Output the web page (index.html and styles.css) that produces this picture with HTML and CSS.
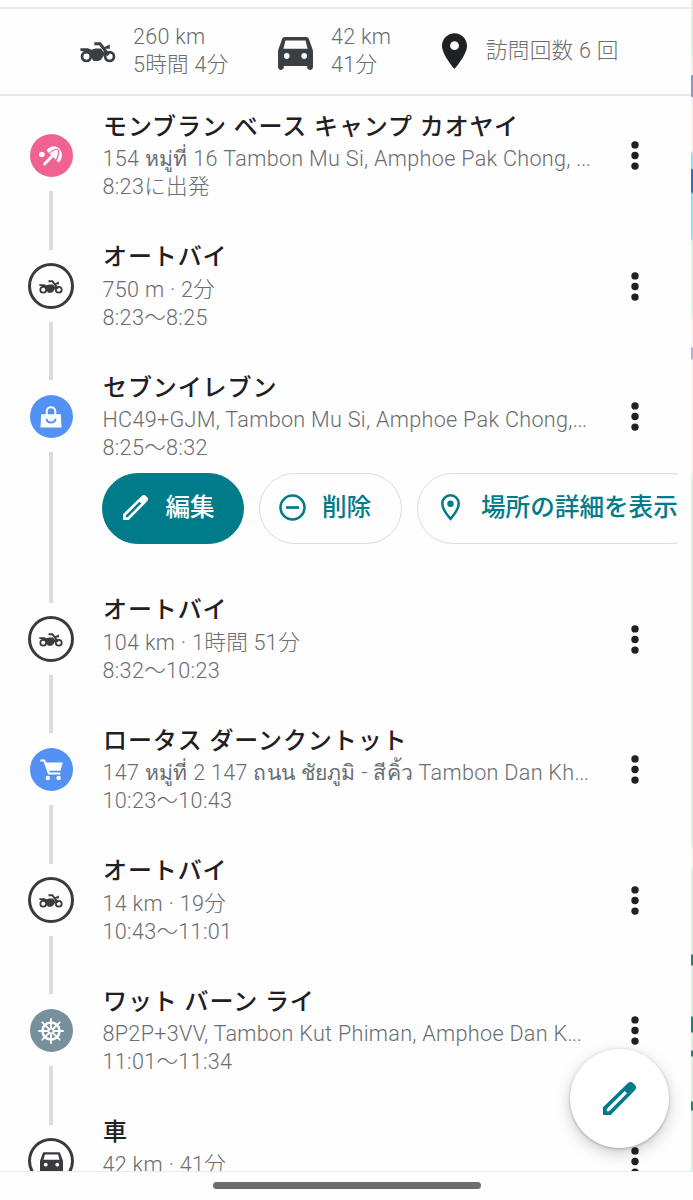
FILE: index.html
```html
<!DOCTYPE html>
<html lang="ja">

<head>
    <title>タイムライン</title>
    <meta charset="UTF-8">
    <link rel="stylesheet" href="styles.css">
</head>

<body>
    <!-- shared icons -->
    <svg class="sprite" width="0" height="0">
        <symbol id="moto" viewBox="0 0 36 21">
            <circle cx="6.4" cy="14.6" r="4.4" fill="none" stroke="currentColor" stroke-width="2.7" />
            <circle cx="29.6" cy="14.6" r="4.4" fill="none" stroke="currentColor" stroke-width="2.7" />
            <path d="M.4 6.2h7.6l3.2 1.600 4.200-1.200h5.600l2.300 3.200 2.800-1-.4 2.200-5 7-2.600 1.100h-4.600l-2.600-4.400C10.400 11.800 7.800 10 3.500 9.400L.4 8.800z" fill="currentColor" />
            <path d="M14.300 1.800h5.700l8.600 11.200" fill="none" stroke="currentColor" stroke-width="2.900" />
            <path d="M23.300 5.400l6.500-3v4.400h-5z" fill="currentColor" />
        </symbol>
        <symbol id="car" viewBox="3 4 18 17">
            <path d="M18.920 5.010C18.720 4.420 18.160 4 17.500 4h-11c-.66 0-1.210.42-1.420 1.010L3 11v8.500c0 .83.67 1.500 1.500 1.500S6 20.330 6 19.500V19h12v.5c0 .83.67 1.500 1.500 1.500s1.500-.67 1.500-1.500V11l-2.080-5.990zM6.850 5.800h10.300l1.100 4.200H5.750L6.850 5.800zM7.500 15.300c-.83 0-1.500-.67-1.500-1.500s.67-1.500 1.500-1.500 1.500.67 1.500 1.500-.67 1.500-1.500 1.500zm9 0c-.83 0-1.500-.67-1.500-1.500s.67-1.500 1.500-1.500 1.500.67 1.500 1.500-.67 1.500-1.500 1.500z" fill="currentColor" />
        </symbol>
        <symbol id="pencil" viewBox="0 0 24 24">
            <path d="M0 24v-5.600L18 .9c1.300-1.300 3-1.100 4 0l1.200 1.200c1.100 1.100 1.100 2.800 0 3.900L5.600 24H0zM2.700 21.300h1.700L17.500 8.200l-1.700-1.700L2.700 19.600z" fill="currentColor" fill-rule="evenodd" />
        </symbol>
        <symbol id="more" viewBox="0 0 8 29">
            <circle cx="4" cy="3.900" r="3.700" fill="currentColor" />
            <circle cx="4" cy="14.500" r="3.700" fill="currentColor" />
            <circle cx="4" cy="25.100" r="3.700" fill="currentColor" />
        </symbol>
    </svg>

    <div class="sheet">
        <header class="summary">
            <div class="stat stat-moto">
                <svg class="icon-moto"><use href="#moto" /></svg>
                <p>260 km<br>5時間 4分</p>
            </div>
            <div class="stat stat-car">
                <svg class="icon-car"><use href="#car" /></svg>
                <p>42 km<br>41分</p>
            </div>
            <div class="stat stat-visits">
                <svg class="icon-pin" viewBox="5 2 14 20">
                    <path d="M12 2C8.130 2 5 5.130 5 9c0 5.250 7 13 7 13s7-7.750 7-13c0-3.870-3.130-7-7-7zm0 9.500a2.500 2.500 0 010-5 2.500 2.500 0 010 5z" fill="currentColor" />
                </svg>
                <p>訪問回数 6 回</p>
            </div>
        </header>

        <main class="timeline">
            <div class="item">
                <div class="rail">
                    <div class="marker pink">
                        <svg width="24" height="20" viewBox="0 0 24 20">
                            <circle cx="2.800" cy="8.500" r="2.800" fill="#fff" />
                            <path d="M7.500 4.600C11.500-1.200 18-.6 20.800 3.200c3.200 4 3.100 9-1.100 13.300L7.500 4.600z" fill="#fff" />
                            <path d="M16.500 6.500L5.600 18" stroke="#fff" stroke-width="2.800" stroke-linecap="round" />
                            <path d="M10.500 7.200c2.600-2.600 5.600-4.200 8.500-4.200M17.300 14c1.900-3.600 2.700-7 2.200-10.500" fill="none" stroke="#f06292" stroke-width="1.200" />
                        </svg>
                    </div>
                </div>
                <div class="content">
                    <div class="head">
                        <div class="text">
                            <h2>モンブラン ベース キャンプ カオヤイ</h2>
                            <p>154 <span class="thai">หมู่ที่</span> 16 Tambon Mu Si, Amphoe Pak Chong, <span class="dots">...</span></p>
                            <p>8:23に出発</p>
                        </div>
                        <svg class="more"><use href="#more" /></svg>
                    </div>
                </div>
            </div>

            <div class="item">
                <div class="rail">
                    <div class="marker ring"><svg class="ring-moto"><use href="#moto" /></svg></div>
                </div>
                <div class="content">
                    <div class="head">
                        <div class="text">
                            <h2>オートバイ</h2>
                            <p>750 m · 2分</p>
                            <p>8:23～8:25</p>
                        </div>
                        <svg class="more"><use href="#more" /></svg>
                    </div>
                </div>
            </div>

            <div class="item expanded">
                <div class="rail">
                    <div class="marker blue">
                        <svg width="22" height="22" viewBox="0 0 22 22">
                            <path d="M1.200 8.300h19.600L21.500 21.500H.5z" fill="#fff" />
                            <path d="M6.700 9V5.500C6.700-.3 15.300-.3 15.300 5.500V9" fill="none" stroke="#fff" stroke-width="2" />
                            <path d="M6.400 12.700c.6 5.200 8.600 5.200 9.200 0" fill="none" stroke="#5491f5" stroke-width="1.900" />
                        </svg>
                    </div>
                </div>
                <div class="content">
                    <div class="head">
                        <div class="text">
                            <h2>セブンイレブン</h2>
                            <p>HC49+GJM, Tambon Mu Si, Amphoe Pak Chong,<span class="dots">...</span></p>
                            <p>8:25～8:32</p>
                        </div>
                        <svg class="more"><use href="#more" /></svg>
                    </div>
                    <div class="actions">
                        <button class="chip filled">
                            <svg width="25" height="25"><use href="#pencil" /></svg>
                            <span>編集</span>
                        </button>
                        <button class="chip">
                            <svg width="27" height="27" viewBox="0 0 27 27">
                                <circle cx="13.500" cy="13.500" r="12" fill="none" stroke="currentColor" stroke-width="2.500" />
                                <path d="M7 13.500h13" stroke="currentColor" stroke-width="2.700" />
                            </svg>
                            <span>削除</span>
                        </button>
                        <button class="chip place">
                            <svg width="19" height="27" viewBox="0 0 19 27">
                                <path d="M9.500 1.300C5 1.300 1.300 4.900 1.300 9.500c0 6 8.200 15.300 8.200 15.300s8.200-9.300 8.200-15.300c0-4.600-3.700-8.200-8.200-8.200z" fill="none" stroke="currentColor" stroke-width="2.500" />
                                <circle cx="9.500" cy="9.700" r="3.200" fill="currentColor" />
                            </svg>
                            <span>場所の詳細を表示</span>
                        </button>
                    </div>
                </div>
            </div>

            <div class="item">
                <div class="rail">
                    <div class="marker ring"><svg class="ring-moto"><use href="#moto" /></svg></div>
                </div>
                <div class="content">
                    <div class="head">
                        <div class="text">
                            <h2>オートバイ</h2>
                            <p>104 km · 1時間 51分</p>
                            <p>8:32～10:23</p>
                        </div>
                        <svg class="more"><use href="#more" /></svg>
                    </div>
                </div>
            </div>

            <div class="item">
                <div class="rail">
                    <div class="marker blue">
                        <svg width="23" height="22" viewBox="0 0 23 22">
                            <path d="M.3 1.600h4l4.600 12.800h11.500" fill="none" stroke="#fff" stroke-width="2" />
                            <path d="M5.400 3.600h17.400l-2.300 8.200H8.200z" fill="#fff" />
                            <circle cx="7.800" cy="19" r="2.200" fill="#fff" />
                            <circle cx="18.600" cy="19" r="2.200" fill="#fff" />
                        </svg>
                    </div>
                </div>
                <div class="content">
                    <div class="head">
                        <div class="text">
                            <h2>ロータス ダーンクントット</h2>
                            <p>147 <span class="thai">หมู่ที่</span> 2 147 <span class="thai">ถนน ชัยภูมิ</span> - <span class="thai">สีคิ้ว</span> Tambon Dan Kh<span class="dots">...</span></p>
                            <p>10:23～10:43</p>
                        </div>
                        <svg class="more"><use href="#more" /></svg>
                    </div>
                </div>
            </div>

            <div class="item">
                <div class="rail">
                    <div class="marker ring"><svg class="ring-moto"><use href="#moto" /></svg></div>
                </div>
                <div class="content">
                    <div class="head">
                        <div class="text">
                            <h2>オートバイ</h2>
                            <p>14 km · 19分</p>
                            <p>10:43～11:01</p>
                        </div>
                        <svg class="more"><use href="#more" /></svg>
                    </div>
                </div>
            </div>

            <div class="item">
                <div class="rail">
                    <div class="marker grey">
                        <svg width="26" height="26" viewBox="-13 -13 26 26" fill="none" stroke="#fff">
                            <circle r="8.500" stroke-width="2.500" />
                            <circle r="2.600" stroke-width="1.600" />
                            <path d="M0-2.500V-12M0 2.500V12M-2.500 0H-12M2.500 0H12M-2-2L-8.700-8.700M2 2L8.700 8.700M2-2L8.700-8.700M-2 2L-8.700 8.700" stroke-width="1.900" stroke-linecap="round" />
                        </svg>
                    </div>
                </div>
                <div class="content">
                    <div class="head">
                        <div class="text">
                            <h2>ワット バーン ライ</h2>
                            <p>8P2P+3VV, Tambon Kut Phiman, Amphoe Dan K<span class="dots">...</span></p>
                            <p>11:01～11:34</p>
                        </div>
                        <svg class="more"><use href="#more" /></svg>
                    </div>
                </div>
            </div>

            <div class="item">
                <div class="rail">
                    <div class="marker ring"><svg class="ring-car"><use href="#car" /></svg></div>
                </div>
                <div class="content">
                    <div class="head">
                        <div class="text">
                            <h2>車</h2>
                            <p>42 km · 41分</p>
                        </div>
                        <svg class="more"><use href="#more" /></svg>
                    </div>
                </div>
            </div>
        </main>
    </div>

    <div class="map-edge"></div>

    <button class="fab">
        <svg width="33" height="33"><use href="#pencil" /></svg>
    </button>

    <footer class="gesture-bar">
        <div class="handle"></div>
    </footer>
</body>

</html>
```

FILE: styles.css
```css
* {
    box-sizing: border-box;
}

body {
    margin: 0;
    height: 1200px;
    position: relative;
    overflow: hidden;
    background: #fefefe;
    font-family: Roboto, "Noto Sans CJK JP", sans-serif;
    color: #1f2023;
}

.sprite {
    position: absolute;
}

svg {
    display: block;
    flex: none;
}

p,
h2 {
    margin: 0;
}

.sheet {
    height: 1171px;
    padding-top: 7px;
    overflow: hidden;
}

.summary {
    display: flex;
    height: 89px;
    padding: 0 0 2px 80px;
    border-top: 2px solid #e6e9ea;
    border-bottom: 2px solid #e6e9ea;
    margin-right: 2px;
}

.stat {
    display: flex;
    align-items: center;
    color: #3a3f44;
}

.stat-moto {
    width: 198px;
    gap: 17px;
}

.stat-car {
    width: 164px;
    gap: 18px;
}

.stat-visits {
    gap: 19px;
    color: #202125;
}

.icon-moto {
    width: 36px;
    height: 21px;
    margin-top: 4px;
}

.icon-car {
    width: 35px;
    height: 33px;
    margin-top: 5px;
}

.icon-pin {
    width: 25px;
    height: 36px;
    margin-top: 1px;
}

.stat p,
.text p {
    font-size: 21.6px;
    font-weight: 300;
    line-height: 28px;
    letter-spacing: 0.25px;
    color: #6a6d71;
    white-space: nowrap;
}

.text p {
    padding-left: 0.5px;
    letter-spacing: 0.3px;
}

.text .thai {
    font-size: 21.2px;
    letter-spacing: 0.25px;
}

.dots {
    letter-spacing: -0.5px;
}

/* timeline */
.timeline {
    padding-top: 13.5px;
}

.item {
    display: flex;
    height: 130.5px;
    padding-left: 28px;
}

.expanded {
    height: 222.5px;
}

.rail {
    width: 46px;
    flex: none;
    display: flex;
    flex-direction: column;
    align-items: center;
}

.rail::before,
.rail::after {
    content: "";
    width: 3.5px;
    background: #dadce0;
}

.rail::before {
    height: 9.5px;
}

.rail::after {
    flex: 1;
}

.item:first-child .rail::before {
    background: none;
}

.marker {
    width: 43px;
    height: 43px;
    margin: 15px 0 14px;
    border-radius: 50%;
    display: flex;
    align-items: center;
    justify-content: center;
    flex: none;
}

.pink {
    background: #f06292;
}

.blue {
    background: #5491f5;
}

.grey {
    background: #78909c;
}

.ring {
    width: 46px;
    height: 46px;
    margin: 13.5px 0 12.5px;
    border: 3px solid #3a3b3e;
    color: #3a3b3e;
}

.ring-moto {
    width: 24px;
    height: 14px;
    margin-top: 2px;
}

.ring-car {
    width: 23px;
    height: 22px;
    margin-top: 3px;
}

.content {
    width: 576px;
    margin-left: 28px;
    overflow: hidden;
}

.head {
    display: flex;
    height: 91px;
}

.text {
    width: 529px;
    padding-top: 1px;
}

.text h2 {
    font-size: 24px;
    font-weight: 500;
    line-height: 32px;
    letter-spacing: 0.9px;
    margin-bottom: 2.5px;
    padding-left: 1px;
    white-space: nowrap;
}

.more {
    width: 8px;
    height: 29px;
    margin-top: 31.5px;
}

.actions {
    display: flex;
    gap: 14.5px;
    margin-top: 11.5px;
}

.chip {
    display: flex;
    align-items: center;
    flex: none;
    height: 71px;
    width: 143.5px;
    padding: 0 0 2px 19.5px;
    gap: 16px;
    border: 1.5px solid #dadce0;
    border-radius: 36px;
    background: none;
    color: #007b8a;
    font-family: inherit;
    font-size: 24.6px;
    font-weight: 500;
    line-height: 32px;
    white-space: nowrap;
}

.filled {
    width: 142px;
    background: #007b8a;
    border-color: #007b8a;
    color: #fff;
    gap: 18px;
}

.place {
    width: 290px;
    padding-left: 23.5px;
    gap: 21px;
}

/* sliver of the map behind the sheet */
.map-edge {
    position: absolute;
    top: 0;
    right: 0;
    width: 2px;
    height: 1171px;
    background: linear-gradient(#d5f5e2 0 55px, #f8f3ea 75px, #8b97c9 75px 97px, #f5f3ee 97px 150px, #8fe3ee 155px 169px, #2f6fc0 169px 192px, #8fe3ee 194px 238px, #d9f5e3 242px 316px, #f7f5ef 320px 347px, #b5b0d8 348px 359px, #f7f5ef 360px 470px, #d5f5e2 480px 845px, #f7f5ef 850px 865px, #d5f5e2 870px 954px, #23826c 955px 965px, #d5f5e2 966px 1016px, #23826c 1017px 1032px, #d5f5e2 1033px 1050px, #23826c 1051px 1056px, #d5f5e2 1057px 1101px, #23826c 1102px 1110px, #d5f5e2 1111px);
}

.fab {
    position: absolute;
    left: 569.5px;
    top: 1048.5px;
    width: 99px;
    height: 99px;
    padding: 0;
    border: none;
    border-radius: 50%;
    background: #fff;
    color: #007b8a;
    display: flex;
    align-items: center;
    justify-content: center;
    box-shadow: 0 1px 3px rgba(0, 0, 0, 0.25), 0 5px 16px rgba(0, 0, 0, 0.2);
}

.gesture-bar {
    position: relative;
    height: 29px;
    border-top: 1px solid #dfeeee;
    background: #fefefe;
    display: flex;
    justify-content: center;
    padding-top: 10px;
}

.handle {
    width: 268px;
    height: 7px;
    border-radius: 4px;
    background: #6d6d6d;
}
```
